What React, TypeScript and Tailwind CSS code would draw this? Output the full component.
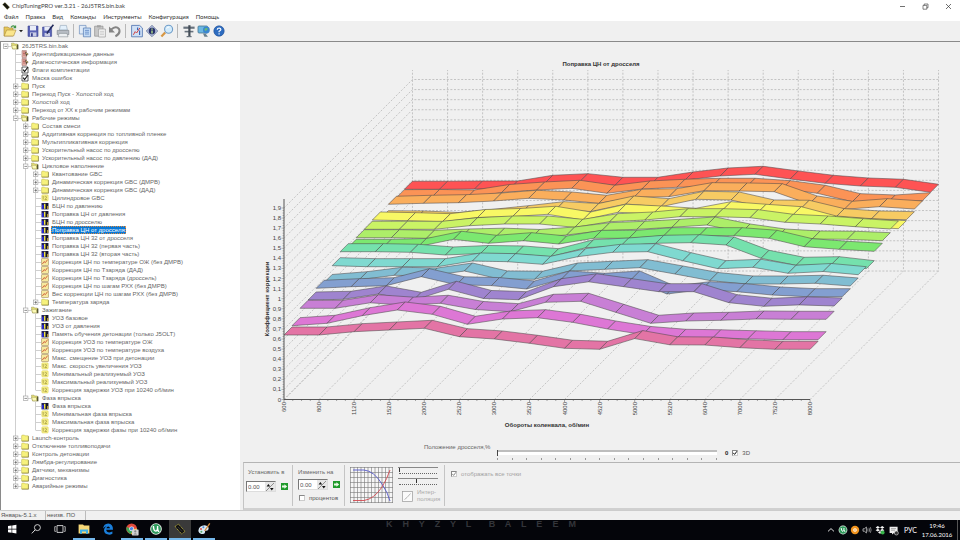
import { useState, type ReactNode } from "react";

type IconKind = "folder" | "open" | "ident" | "flag" | "number" | "surface" | "curve";

interface TreeItem {
  level: number;
  kind: IconKind;
  label: string;
}

const item = (level: number, kind: IconKind, label: string): TreeItem => ({ level, kind, label });

const tree: TreeItem[] = [
  item(0, "open", "26J5TRS.bin.bak"),
  item(1, "ident", "Идентификационные данные"),
  item(1, "ident", "Диагностическая информация"),
  item(1, "flag", "Флаги комплектации"),
  item(1, "flag", "Маска ошибок"),
  item(1, "folder", "Пуск"),
  item(1, "folder", "Переход Пуск - Холостой ход"),
  item(1, "folder", "Холостой ход"),
  item(1, "folder", "Переход от ХХ к рабочим режимам"),
  item(1, "open", "Рабочие режимы"),
  item(2, "folder", "Состав смеси"),
  item(2, "folder", "Аддитивная коррекция по топливной пленке"),
  item(2, "folder", "Мультипликативная коррекция"),
  item(2, "folder", "Ускорительный насос по дросселю"),
  item(2, "folder", "Ускорительный насос по давлению (ДАД)"),
  item(2, "open", "Цикловое наполнение"),
  item(3, "folder", "Квантование GBC"),
  item(3, "folder", "Динамическая коррекция GBC (ДМРВ)"),
  item(3, "folder", "Динамическая коррекция GBC (ДАД)"),
  item(3, "number", "Цилиндровое GBC"),
  item(3, "surface", "БЦН по давлению"),
  item(3, "surface", "Поправка ЦН от давления"),
  item(3, "surface", "БЦН по дросселю"),
  item(3, "surface", "Поправка ЦН от дросселя"),
  item(3, "surface", "Поправка ЦН 32 от дросселя"),
  item(3, "surface", "Поправка ЦН 32 (первая часть)"),
  item(3, "surface", "Поправка ЦН 32 (вторая часть)"),
  item(3, "curve", "Коррекция ЦН по температуре ОЖ (без ДМРВ)"),
  item(3, "curve", "Коррекция ЦН по Tзаряда (ДАД)"),
  item(3, "curve", "Коррекция ЦН по Tзаряда (дроссель)"),
  item(3, "curve", "Коррекция ЦН по шагам РХХ (без ДМРВ)"),
  item(3, "curve", "Вес коррекции ЦН по шагам РХХ (без ДМРВ)"),
  item(3, "folder", "Температура заряда"),
  item(2, "open", "Зажигание"),
  item(3, "surface", "УОЗ базовое"),
  item(3, "surface", "УОЗ от давления"),
  item(3, "surface", "Память обучения детонации (только J5OLT)"),
  item(3, "curve", "Коррекция УОЗ по температуре ОЖ"),
  item(3, "curve", "Коррекция УОЗ по температуре воздуха"),
  item(3, "curve", "Макс. смещение УОЗ при детонации"),
  item(3, "number", "Макс. скорость увеличения УОЗ"),
  item(3, "number", "Минимальный реализуемый УОЗ"),
  item(3, "number", "Максимальный реализуемый УОЗ"),
  item(3, "number", "Коррекция задержки УОЗ при 10240 об/мин"),
  item(2, "open", "Фаза впрыска"),
  item(3, "surface", "Фаза впрыска"),
  item(3, "number", "Минимальная фаза впрыска"),
  item(3, "number", "Максимальная фаза впрыска"),
  item(3, "number", "Коррекция задержки фазы при 10240 об/мин"),
  item(1, "folder", "Launch-контроль"),
  item(1, "folder", "Отключение топливоподачи"),
  item(1, "folder", "Контроль детонации"),
  item(1, "folder", "Лямбда-регулирование"),
  item(1, "folder", "Датчики, механизмы"),
  item(1, "folder", "Диагностика"),
  item(1, "folder", "Аварийные режимы"),
];

// does the branch at `level` go on below row `index`?
function continues(index: number, level: number) {
  for (let i = index + 1; i < tree.length; i++) {
    if (tree[i].level === level) return true;
    if (tree[i].level < level) return false;
  }
  return false;
}

function TreeIcon({ kind }: { kind: IconKind }) {
  return (
    <svg className="size-2 shrink-0" viewBox="0 0 8 8">
      {kind === "folder" && (
        <>
          <path d="M.6 1.8 L1.2 1.1 H3.4 L4 1.8 H7.2 V7 H.6Z" fill="#f7f27c" stroke="#b9b04a" strokeWidth=".5" />
          <path d="M.8 7.2 H7.5 V2.2" fill="none" stroke="#77702c" strokeWidth=".6" />
        </>
      )}
      {kind === "open" && (
        <>
          <path d="M.5 1.2 H3 L3.5 2 H6.3 V6.8 H1.5Z" fill="#f3ee7d" stroke="#8d8640" strokeWidth=".5" />
          <path d="M1.6 6.9 L.5 3.2 H5.2 L6.2 6.9Z" fill="#fbf9b4" stroke="#8d8640" strokeWidth=".5" />
          <path d="M6 2.4 H7.4 V7.2 H5.8Z" fill="#55552f" />
        </>
      )}
      {kind === "ident" && (
        <>
          <path d="M1 .6 H5.4 V7.4 H1Z" fill="#e7b5ac" stroke="#8e5a58" strokeWidth=".5" />
          <path d="M2 2 H4.5 M2 3.5 H4.5 M2 5 H4" stroke="#a33c3c" strokeWidth=".6" />
          <path d="M4 1.4 L7.6 4 L5 6.6Z" fill="#5a4b3c" />
          <path d="M5 3.2 L7 4.4" stroke="#d8c070" strokeWidth=".8" />
        </>
      )}
      {kind === "flag" && (
        <>
          <path d="M1 1 H7 V7 H1Z" fill="#fff" stroke="#333" strokeWidth=".8" />
          <path d="M2.2 3.6 L3.6 5.6 L6.8 1.2" fill="none" stroke="#111" strokeWidth="1.1" />
        </>
      )}
      {kind === "number" && (
        <>
          <rect x=".8" y=".8" width="6.4" height="6.2" rx="1" fill="#f8f18a" stroke="#d9cf55" strokeWidth=".5" />
          <path d="M2.2 2.4 V5.6 M1.5 3.1 L2.2 2.4" stroke="#8a7f28" strokeWidth=".6" fill="none" />
          <path d="M3.6 2.9 Q4.6 1.9 5.5 2.8 Q5.8 3.8 3.8 5.6 H6" stroke="#8a7f28" strokeWidth=".6" fill="none" />
        </>
      )}
      {kind === "surface" && (
        <>
          <rect x=".5" y="1" width="7" height="6.4" fill="#23235c" />
          <rect x="1" y="3" width="1.6" height="4" fill="#2a2ae0" />
          <rect x="3" y="1.8" width="1.4" height="5" fill="#f3e63c" />
          <rect x="5.2" y="1" width="1.5" height="6" fill="#151515" />
          <rect x="6.2" y="4" width="1.2" height="3" fill="#d0b03a" />
        </>
      )}
      {kind === "curve" && (
        <>
          <rect x=".7" y=".7" width="6.6" height="6.6" fill="#f6e99e" stroke="#a48b52" strokeWidth=".6" />
          <path d="M1.4 6 L3 3.6 L4.4 4.6 L6.6 1.6" fill="none" stroke="#c8472c" strokeWidth=".8" />
        </>
      )}
    </svg>
  );
}

function Branch({ index }: { index: number }) {
  const { level, kind } = tree[index];
  const expandable = kind === "folder" || kind === "open";
  return (
    <>
      {Array.from({ length: level }, (_, l) => (
        <svg key={l} className="h-2 w-2.5 shrink-0" viewBox="0 0 10 8">
          {l > 0 && continues(index, l) && <path d="M4.5 0 V8" stroke="#cfcfcf" />}
        </svg>
      ))}
      <svg className="h-2 w-2.5 shrink-0" viewBox="0 0 10 8">
        {level > 0 && <path d={continues(index, level) ? "M4.5 0 V8" : "M4.5 0 V4"} stroke="#cfcfcf" />}
        <path d="M4.5 4.5 H10" stroke="#cfcfcf" />
        {expandable && (
          <>
            <rect x="2.5" y="2" width="4.4" height="4.6" fill="#fff" stroke="#999" strokeWidth=".6" />
            <path d={kind === "open" ? "M3.4 4.4 H6" : "M3.4 4.4 H6 M4.7 3 V5.8"} stroke="#444" strokeWidth=".6" />
          </>
        )}
      </svg>
    </>
  );
}

// chart geometry
const LEFT = 284;
const BASE = 399.5;
const STEP_X = 35.07;
const STEP_Y = 10.08;
const DEPTH = 8.03;
const rpm = [600, 800, 1120, 1520, 2000, 2520, 3000, 3520, 4000, 4520, 5000, 5520, 6040, 7000, 7520, 8000];

// front edge of every ribbon, nearest ribbon first
const ribbons: { color: string; edge: number[] }[] = [
  { color: "#e374a5", edge: [335, 335, 331.7, 330, 328.3, 336.7, 339, 343.3, 348.3, 349.3, 338.6, 344.8, 345, 347.7, 349.3, 349.3] },
  { color: "#dd77d5", edge: [325.7, 323.3, 315.7, 310, 314.3, 324.3, 319, 317.7, 322.3, 329, 334.5, 337.3, 337.8, 338.8, 339.7, 339.7] },
  { color: "#c87fd5", edge: [308.3, 308.3, 302.8, 305.2, 303.3, 309.5, 311.7, 302.3, 301.3, 312.3, 323.3, 321, 320.3, 319, 319.3, 319.3] },
  { color: "#9f84cf", edge: [300, 299.3, 294, 300.3, 289.3, 298.5, 299.7, 286.7, 281.8, 286.7, 291.7, 291.7, 302.7, 306.3, 304.9, 306] },
  { color: "#839fd0", edge: [288.3, 286.7, 285.7, 276.7, 284.8, 285.6, 289, 279, 281.3, 279, 294, 289.7, 291.7, 295, 296.7, 296.7] },
  { color: "#81bdd2", edge: [282.5, 279.7, 275.3, 276, 271, 279, 279.3, 271, 269.3, 267.7, 274, 280.5, 284, 284, 283.3, 286] },
  { color: "#7fd9d0", edge: [265.7, 266.7, 266.7, 266.7, 261, 261.7, 264.3, 256.7, 252.3, 251.7, 260.7, 268.7, 267.3, 273.3, 271.5, 274.7] },
  { color: "#75e1ad", edge: [251.7, 251.7, 252.3, 255, 253.5, 254, 256.7, 247.7, 246, 243.3, 242.7, 245, 258.3, 265.3, 264.7, 268.7] },
  { color: "#7ce870", edge: [247.3, 247.3, 246.5, 239.3, 243.3, 240.7, 244, 238.3, 238.3, 235.7, 235.7, 235.7, 238.3, 246.7, 249.3, 251.3] },
  { color: "#adee69", edge: [237.7, 237.7, 238.3, 237, 236.2, 237.5, 235, 230.7, 229.3, 227.3, 225, 232, 237, 239, 239.3, 240.7] },
  { color: "#caf365", edge: [229.3, 229.3, 229.3, 225.7, 224, 224, 227.3, 221.7, 220, 216.7, 216.7, 217.7, 222.3, 224, 226.7, 229] },
  { color: "#f8f865", edge: [220, 220.7, 221.7, 217.5, 216.5, 214.3, 220, 212.3, 214, 216.3, 209.7, 212.3, 214.7, 224, 226.7, 228.7] },
  { color: "#f7cb63", edge: [218.7, 219, 220.5, 217.3, 213.7, 209.7, 211.5, 204, 206.7, 199.3, 200, 208, 208.3, 216.7, 219, 219.7] },
  { color: "#faae5c", edge: [204.3, 203.3, 202.7, 201, 198.3, 200, 203.3, 197.3, 196.7, 190.7, 191, 191.7, 204, 209.3, 206.7, 209] },
  { color: "#fb9356", edge: [197.7, 197.5, 198, 192.5, 190, 188.3, 193.3, 189, 187.3, 186.3, 186.3, 188.7, 193.3, 201.7, 203, 200.7] },
  { color: "#fe5354", edge: [189.3, 189.3, 189, 189, 183.3, 181.7, 185.3, 185.3, 180, 176, 174.3, 179, 183.3, 186, 187.3, 192.3] },
];

function SurfaceChart() {
  const depth = DEPTH * ribbons.length;
  const right = LEFT + STEP_X * (rpm.length - 1);
  return (
    <svg className="block w-full" viewBox="243 42 717 393" role="img" aria-label="Поправка ЦН от дросселя">
      <text x="601" y="66" textAnchor="middle" fontSize="6" fontWeight="700" fill="#333">
        Поправка ЦН от дросселя
      </text>

      {/* walls and floor */}
      <g stroke="#a4a4a4" strokeWidth=".6" strokeDasharray="2 1.6" fill="none">
        {rpm.map((r, j) => {
          const x = LEFT + STEP_X * j;
          return <path key={r} d={`M${x} ${BASE} l${depth} ${-depth} V70`} />;
        })}
        {Array.from({ length: 20 }, (_, k) => {
          const y = BASE - STEP_Y * k;
          return <path key={k} d={`M${LEFT} ${y} l${depth} ${-depth} H${right + depth}`} />;
        })}
      </g>

      {ribbons
        .map(({ color, edge }, i) => (
          <g key={color} fill={color} stroke="#4d4a4c" strokeWidth=".55" strokeLinejoin="round">
            {edge.slice(1).map((y, j) => {
              const x = LEFT + DEPTH * i + STEP_X * j;
              return (
                <path
                  key={j}
                  d={`M${x} ${edge[j]} l${DEPTH} ${-DEPTH} L${x + STEP_X + DEPTH} ${y - DEPTH} l${-DEPTH} ${DEPTH}Z`}
                />
              );
            })}
          </g>
        ))
        .reverse()}

      {/* axes */}
      <g stroke="#555" fill="none">
        <path d={`M${LEFT} 199 V${BASE} H${right}`} strokeWidth="1" />
        {Array.from({ length: 77 }, (_, k) => (
          <path key={k} d={`M${LEFT - (k % 4 ? 1.5 : 2.5)} ${BASE - (STEP_Y / 4) * k} H${LEFT}`} strokeWidth=".4" />
        ))}
        {Array.from({ length: 61 }, (_, k) => (
          <path key={k} d={`M${LEFT + (STEP_X / 4) * k} ${BASE} v${k % 4 ? 1.5 : 2.5}`} strokeWidth=".5" />
        ))}
      </g>
      <g fontSize="6" fill="#444">
        {Array.from({ length: 20 }, (_, k) => (
          <text key={k} x="281" y={BASE - STEP_Y * k + 2} textAnchor="end">
            {String(k / 10).replace(".", ",")}
          </text>
        ))}
        {rpm.map((r, j) => (
          <text key={r} transform={`translate(${LEFT + STEP_X * j + 2} 402) rotate(-90)`} textAnchor="end">
            {r}
          </text>
        ))}
      </g>
      <g fontSize="6" fontWeight="700" fill="#333" textAnchor="middle">
        <text transform="translate(269 299) rotate(-90)">Коэффициент коррекции</text>
        <text x="547" y="427">
          Обороты коленвала, об/мин
        </text>
      </g>
    </svg>
  );
}

function ToolButton({ label, children }: { label: string; children: ReactNode }) {
  return (
    <button type="button" aria-label={label} className="flex h-4 w-[15px] items-center justify-center">
      <svg className="size-3.5" viewBox="0 0 14 14" fill="none">
        {children}
      </svg>
    </button>
  );
}

function Separator() {
  return <div className="mx-[3px] h-3.5 w-px bg-[#b8b8b8]" />;
}

function Toolbar() {
  return (
    <div className="flex h-[21px] shrink-0 items-center border-b border-[#8a8a8a] bg-[#f0f0f0] pl-0.5">
      <ToolButton label="Открыть">
        <path d="M1 3 H5 L6 4 H10 V12 H1Z" fill="#e6c85a" stroke="#a8883a" strokeWidth=".6" />
        <path d="M1.2 12 L3.6 6 H13 L10.6 12Z" fill="#fbe68c" stroke="#a8883a" strokeWidth=".6" />
        <path d="M8 3.4 Q10 .6 12.2 3 M12.6 1.4 V3.6 H10.6" stroke="#3f9447" strokeWidth="1.1" />
      </ToolButton>
      <button type="button" aria-label="Недавние файлы" className="flex h-4 w-2 items-center justify-center">
        <svg className="size-1" viewBox="0 0 4 4">
          <path d="M0 1 H4 L2 3.2Z" fill="#222" />
        </svg>
      </button>
      <ToolButton label="Сохранить">
        <path d="M2 2 H12 V12.4 H2Z" fill="#5a63b6" stroke="#3a4390" strokeWidth=".6" />
        <path d="M4 2 H10 V6.4 H4Z" fill="#e9edf8" />
        <path d="M4 8.4 H10.4 V12.4 H4Z" fill="#c9cde6" />
        <path d="M5 9.2 H6.8 V12.4 H5Z" fill="#3a4390" />
      </ToolButton>
      <ToolButton label="Сохранить как">
        <path d="M1.6 3 H10.6 V12.4 H1.6Z" fill="#5a63b6" stroke="#3a4390" strokeWidth=".6" />
        <path d="M3.4 3 H8.8 V6.6 H3.4Z" fill="#e9edf8" />
        <path d="M3.6 9 H9 V12.4 H3.6Z" fill="#c9cde6" />
        <path d="M12.4 .8 L7 7.6 L6 9.6" stroke="#222a5a" strokeWidth="1.6" />
      </ToolButton>
      <ToolButton label="Печать">
        <path d="M4.4 1.4 L10.4 1.4 L11.4 6 H3.4Z" fill="#e3f0fb" stroke="#8ea3b5" strokeWidth=".6" />
        <path d="M1.2 6.4 H12.8 V10.6 H1.2Z" fill="#b7bcc4" stroke="#777d86" strokeWidth=".6" />
        <path d="M3 9.4 H11 L12 12.8 H2.2Z" fill="#eceff2" stroke="#888e96" strokeWidth=".6" />
      </ToolButton>
      <Separator />
      <ToolButton label="Копировать">
        <path d="M1.4 1.4 H8 V10 H1.4Z" fill="#dfeaf7" stroke="#6e8fbd" strokeWidth=".7" />
        <path d="M5.4 4 H12.6 V12.8 H5.4Z" fill="#c4dbf5" stroke="#5578b0" strokeWidth=".7" />
        <path d="M7 6.4 H11 M7 8.2 H11 M7 10 H11" stroke="#5680bd" strokeWidth=".7" />
      </ToolButton>
      <ToolButton label="Вставить">
        <path d="M1.6 2.2 H10 V12.2 H1.6Z" fill="#c8c8c8" stroke="#929292" strokeWidth=".7" />
        <path d="M4 1.2 H7.8 V3.4 H4Z" fill="#a2a2a2" />
        <path d="M5.6 5 H12.4 V13 H5.6Z" fill="#f2f2f2" stroke="#9c9c9c" strokeWidth=".7" />
        <path d="M7 7.4 H11 M7 9 H11 M7 10.6 H11" stroke="#b8b8b8" strokeWidth=".6" />
      </ToolButton>
      <ToolButton label="Отменить">
        <path d="M3.2 5.6 Q8 1.4 11 5 Q13 9 7.4 12.4" stroke="#858585" strokeWidth="2" />
        <path d="M1 2.4 V8.4 H7Z" fill="#858585" />
      </ToolButton>
      <Separator />
      <ToolButton label="График">
        <path d="M1.6 1.4 H9.6 L12.4 4 V12.8 H1.6Z" fill="#cfe0f5" stroke="#4a70ad" strokeWidth=".8" />
        <path d="M3.4 10.8 L5.2 7.6 L6.6 9 L9.8 4" stroke="#d04242" strokeWidth="1" />
        <path d="M9.6 6.6 V11 M7.6 3.4 V6" stroke="#3a66b8" strokeWidth="1.2" />
      </ToolButton>
      <ToolButton label="Сведения">
        <path d="M7 1.2 L12.8 7 L7 12.8 L1.2 7Z" fill="#aab5d4" stroke="#56668f" strokeWidth=".6" />
        <circle cx="7" cy="7" r="3.2" fill="#27306b" />
        <path d="M7 4.6 V5.8 M7 6.4 V9.4" stroke="#b9ea8c" strokeWidth="1.3" />
      </ToolButton>
      <ToolButton label="Найти">
        <path d="M5.2 8.4 L1.4 12.6" stroke="#d69745" strokeWidth="2.2" />
        <circle cx="8.6" cy="5.2" r="4" fill="#d3ebfb" stroke="#6e9cc8" strokeWidth="1.1" />
        <path d="M6.6 4.6 Q7.4 2.8 9.4 3" stroke="#fff" strokeWidth=".9" />
      </ToolButton>
      <Separator />
      <ToolButton label="Инструменты">
        <path d="M1.4 2.6 H12.6 V4.8 H1.4Z" fill="#69737e" />
        <path d="M2.6 7.6 H11.4" stroke="#69737e" strokeWidth="1.6" />
        <path d="M7.4 1.2 V13" stroke="#454e58" strokeWidth="2.2" />
        <path d="M4.6 12.6 H9.6" stroke="#69737e" strokeWidth="1.2" />
      </ToolButton>
      <ToolButton label="Подключение">
        <rect x="1" y="2" width="9.6" height="7" rx="1" fill="#6bb7e2" stroke="#46738f" strokeWidth=".8" />
        <circle cx="9.4" cy="6" r="3.4" fill="#3b86cf" />
        <path d="M7.4 5 Q9 3.2 11 4.6 Q10 6.8 8 7Z" fill="#66bb7c" />
        <path d="M6 9.4 H8.4 L11 12.8 H7.4Z" fill="#69808f" />
      </ToolButton>
      <ToolButton label="Справка">
        <circle cx="7" cy="7" r="5.2" fill="#2d6cc0" stroke="#1d4b94" strokeWidth=".6" />
        <path d="M5.2 5.8 Q5.4 4 7.1 4 Q9 4.2 8.8 5.8 Q8.4 6.8 7.1 7.3 V8.3 M7.1 9.2 V10.4" stroke="#fff" strokeWidth="1.2" />
      </ToolButton>
    </div>
  );
}

function Spinner({ label }: { label: string }) {
  return (
    <span className="flex h-[11px] w-[30px] items-center border border-[#777] border-r-[#ddd] border-b-[#ddd] bg-white">
      <input
        aria-label={label}
        defaultValue="0.00"
        className="w-[18px] min-w-0 bg-transparent pl-px text-[6px] leading-[8px] text-[#555] outline-none"
      />
      <button type="button" aria-label={`${label}: шаг`} className="flex h-full flex-1 items-center justify-center bg-[#e6e6e6]">
        <svg className="size-2" viewBox="0 0 8 8">
          <path d="M0 8 L8 0" stroke="#666" strokeWidth=".7" />
          <path d="M.6 3.4 L2.4 1 L4.2 3.4Z M4 5 H7.6 L5.8 7.4Z" fill="#111" />
        </svg>
      </button>
    </span>
  );
}

function ApplyButton({ label }: { label: string }) {
  return (
    <button type="button" aria-label={label} className="flex size-[7px] items-center justify-center bg-[#1f9a2c]">
      <svg className="size-[7px]" viewBox="0 0 7 7">
        <path d="M1 2.6 H3.4 V1.2 L6.2 3.5 L3.4 5.8 V4.4 H1Z" fill="#eafbe6" />
      </svg>
    </button>
  );
}

const checkboxClass =
  "size-[6px] shrink-0 appearance-none border border-[#888] border-r-[#ccc] border-b-[#ccc] bg-white";

function Check({ label, checked, disabled }: { label: string; checked?: boolean; disabled?: boolean }) {
  const [on, setOn] = useState(!!checked);
  return (
    <label className={`flex items-center gap-1 ${disabled ? "text-[#a3a3a3]" : "text-[#555]"}`}>
      <span className="relative flex">
        <input type="checkbox" checked={on} disabled={disabled} onChange={() => setOn(!on)} className={checkboxClass} />
        {on && (
          <svg className="pointer-events-none absolute inset-0 size-[6px]" viewBox="0 0 6 6">
            <path d="M1.2 2.8 L2.6 4.4 L5 1.2" fill="none" stroke={disabled ? "#888" : "#111"} strokeWidth="1" />
          </svg>
        )}
      </span>
      {label}
    </label>
  );
}

const rangeClass =
  "block h-[5px] w-full appearance-none border-t-2 border-[#bdbdbd] bg-white [&::-webkit-slider-thumb]:h-[6px] [&::-webkit-slider-thumb]:w-px [&::-webkit-slider-thumb]:appearance-none [&::-webkit-slider-thumb]:bg-[#444]";
const smallRangeClass =
  "block h-[5px] w-full appearance-none border-t border-[#888] bg-[#f0f0f0] [&::-webkit-slider-thumb]:h-[4px] [&::-webkit-slider-thumb]:w-px [&::-webkit-slider-thumb]:appearance-none [&::-webkit-slider-thumb]:bg-[#333]";

function SmallRange({ label, value }: { label: string; value: number }) {
  return (
    <div className="flex flex-col gap-px">
      <input type="range" aria-label={label} defaultValue={value} className={smallRangeClass} />
      <div className="mx-px border-t border-dotted border-[#666]" />
    </div>
  );
}

function CurvePreview() {
  return (
    <svg className="h-9 w-[43px]" viewBox="0 0 43 36">
      <rect width="43" height="36" fill="#f6f6f6" />
      <g stroke="#777" strokeWidth=".6">
        {Array.from({ length: 13 }, (_, i) => (
          <path key={i} d={`M${0.5 + i * 3.5} 0 V36`} />
        ))}
        {Array.from({ length: 8 }, (_, i) => (
          <path key={i} d={`M0 ${0.5 + i * 5} H43`} />
        ))}
      </g>
      <path d="M3 3 H14 Q24 4 32 17 Q38 26 40 34" fill="none" stroke="#5357c9" strokeWidth=".9" />
      <path d="M3 33.5 H14 Q24 32 32 20 Q37 12 40 3" fill="none" stroke="#d24a50" strokeWidth=".9" />
    </svg>
  );
}

function EditPanel() {
  return (
    <div className="flex h-12 shrink-0 border-t border-b-2 border-l border-t-[#b4b4b4] border-b-[#d0d0d0] border-l-[#c4c4c4] py-[2px] text-[6px] leading-[8px] text-[#666]">
      <div className="flex w-[49px] flex-col gap-[5px] border-r border-[#c4c4c4] pt-[3px] pl-0.5">
        <span className="pl-0.5 whitespace-nowrap">Установить в</span>
        <div className="flex items-center gap-[5px]">
          <Spinner label="Установить в" />
          <ApplyButton label="Установить" />
        </div>
      </div>
      <div className="flex w-[52px] flex-col gap-[3px] border-r border-[#c4c4c4] pt-[3px] pl-[5px]">
        <span className="whitespace-nowrap">Изменить на</span>
        <div className="flex items-center gap-[5px]">
          <Spinner label="Изменить на" />
          <ApplyButton label="Изменить" />
        </div>
        <div className="pt-px pl-px">
          <Check label="процентов" />
        </div>
      </div>
      <div className="flex w-[100px] gap-[5px] border-r border-[#c4c4c4] pt-[2px] pl-[5px]">
        <CurvePreview />
        <div className="flex w-10 flex-col gap-1">
          <SmallRange label="Начало" value={2} />
          <SmallRange label="Конец" value={45} />
          <button type="button" className="flex items-center gap-1 pl-1 text-left leading-[7px] text-[#aaa]">
            <svg className="size-[11px] shrink-0" viewBox="0 0 11 11">
              <rect x=".5" y=".5" width="10" height="10" fill="#fafafa" stroke="#999" strokeWidth=".7" />
              <path d="M2.5 8.5 L5 6.5 L8.5 2.5" fill="none" stroke="#999" strokeWidth=".7" />
            </svg>
            <span>
              Интер-
              <br />
              поляция
            </span>
          </button>
        </div>
      </div>
      <div className="pt-[5px] pl-1.5 whitespace-nowrap">
        <Check label="отображать все точки" checked disabled />
      </div>
    </div>
  );
}

function TaskButton({ label, state, children }: { label: string; state?: "running" | "active"; children: ReactNode }) {
  return (
    <button
      type="button"
      aria-label={label}
      className={`mx-px flex h-full w-[22px] items-center justify-center border-b-2 ${
        state ? "border-[#76b9ed]" : "border-transparent"
      } ${state === "active" ? "bg-[#3a3a3a]" : ""}`}
    >
      <svg className="size-[14px]" viewBox="0 0 14 14" fill="none">
        {children}
      </svg>
    </button>
  );
}

function Taskbar() {
  return (
    <footer className="flex h-5 shrink-0 items-stretch bg-[#04050a] text-white">
      <div className="flex">
        <TaskButton label="Пуск">
          <path
            d="M3 4 L6.6 3.5 V6.8 H3Z M7.2 3.4 L11.4 2.8 V6.8 H7.2Z M3 7.4 H6.6 V10.7 L3 10.2Z M7.2 7.4 H11.4 V11.4 L7.2 10.8Z"
            fill="#fff"
          />
        </TaskButton>
        <TaskButton label="Поиск">
          <circle cx="8.4" cy="5.6" r="3" stroke="#ddd" strokeWidth=".9" />
          <path d="M6.2 7.8 L2.8 11.4" stroke="#ddd" strokeWidth="1" />
        </TaskButton>
        <TaskButton label="Представление задач">
          <path d="M4 3.6 H10 V10.4 H4Z" stroke="#ddd" strokeWidth=".9" />
          <path d="M2.8 4.6 H1.8 V9.4 H2.8 M11.2 4.6 H12.2 V9.4 H11.2" stroke="#ddd" strokeWidth=".8" />
        </TaskButton>
        <TaskButton label="Проводник" state="running">
          <path d="M1.6 2.4 H6 L7 3.4 H12.4 V11.6 H1.6Z" fill="#f6d878" />
          <path d="M3 7.4 H11 V11.8 H9 V9.4 H5 V11.8 H3Z" fill="#3fb2e8" />
        </TaskButton>
        <TaskButton label="Edge">
          <path
            d="M2 6.6 Q2.8 1.8 7.2 1.6 Q12 1.8 12 7.8 H5.2 Q5.6 10.4 8.4 10.4 Q10 10.4 11.4 9.6 V11.8 Q9.6 12.8 7.4 12.6 Q3 12 3 8 Q3.2 5.4 5.6 4.2 Q3.4 4.6 2 6.6Z M5.4 6.2 H9 Q8.8 4.4 7.2 4.4 Q5.8 4.5 5.4 6.2Z"
            fill="#1a7fdc"
            fillRule="evenodd"
          />
        </TaskButton>
        <TaskButton label="Chrome" state="running">
          <circle cx="6.6" cy="6.8" r="5.4" fill="#e04a3c" />
          <path d="M1.6 4.8 Q.4 10 5.8 12.2 L8 8.4Z" fill="#3aa757" />
          <path d="M12 6.4 Q12 12 6 12.2 L8.6 7Z" fill="#f7c930" />
          <circle cx="6.6" cy="6.8" r="2.4" fill="#fff" />
          <circle cx="6.6" cy="6.8" r="1.8" fill="#4a86e8" />
          <rect x="7" y="7.4" width="6.6" height="6" rx=".6" fill="#d4d4d4" />
          <circle cx="10.3" cy="9.4" r="1.1" fill="#888" />
          <path d="M8.4 12.6 Q10.3 10 12.2 12.6Z" fill="#888" />
        </TaskButton>
        <TaskButton label="uTorrent" state="running">
          <circle cx="7" cy="7" r="5.8" fill="#f3f7f3" />
          <circle cx="7" cy="7" r="4.9" fill="#2f9a5c" />
          <path d="M4.4 4 Q4.6 9.4 7 9 Q8.8 8.8 8.6 4 M8.6 6 Q8.8 10 10.4 9.6" stroke="#fff" strokeWidth="1.4" />
        </TaskButton>
        <TaskButton label="ChipTuningPRO" state="active">
          <path d="M2 4.6 L5.4 2 L12 9.4 L8.6 12Z" fill="#111" stroke="#b3a93c" strokeWidth="1" strokeDasharray="1.2 .8" />
          <path d="M5 5 L9 9.4" stroke="#333" strokeWidth="1" />
        </TaskButton>
        <TaskButton label="Paint" state="running">
          <path d="M1.4 8.4 Q2 3.4 7.6 3.2 Q12 3.6 11.6 7 Q11 9 9 8.6 Q7.6 9 8 10.4 Q7.6 12.4 4.6 12 Q1.4 11.2 1.4 8.4Z" fill="#d9e9f4" />
          <circle cx="4" cy="7" r="1" fill="#d9534f" />
          <circle cx="6.4" cy="5.2" r="1" fill="#4a86d8" />
          <circle cx="4.4" cy="9.8" r="1" fill="#55a868" />
          <path d="M12.8 1.4 L7.6 9" stroke="#d38b3c" strokeWidth="1.3" />
        </TaskButton>
      </div>
      <div className="flex-1 overflow-hidden pr-20 text-center text-[9px] leading-[8px] font-bold whitespace-pre text-[#34363b]">
        {"K    H    Y    Z    Y    L       B    A    L    E    E    M"}
      </div>
      <div className="flex items-center gap-[2px] pr-0.5">
        <svg className="size-[10px]" viewBox="0 0 10 10" fill="none">
          <path d="M2 6.4 L5 3.6 L8 6.4" stroke="#ddd" />
        </svg>
        <svg className="size-[10px]" viewBox="0 0 10 10" fill="none">
          <circle cx="5" cy="5" r="4.4" fill="#e8f2ea" />
          <circle cx="5" cy="5" r="3.7" fill="#2f9a5c" />
          <path d="M3.2 3 Q3.4 6.6 5 6.4 Q6.2 6.2 6 3 M6 5 Q6.4 7 7.4 6.8" stroke="#fff" />
        </svg>
        <svg className="size-[10px]" viewBox="0 0 10 10" fill="none">
          <circle cx="5" cy="5" r="4.2" fill="#f0931e" />
          <circle cx="5" cy="5" r="1.8" fill="#fff" />
          <circle cx="5" cy="5" r=".8" fill="#f0931e" />
        </svg>
        <svg className="size-[10px]" viewBox="0 0 10 10" fill="none">
          <path d="M1 3.8 H2.4 L4.4 2 V8 L2.4 6.2 H1Z" stroke="#ddd" strokeWidth=".7" />
          <path d="M5.6 3.6 Q6.4 5 5.6 6.4 M7 2.8 Q8.2 5 7 7.2 M8.4 2.2 Q9.8 5 8.4 7.8" stroke="#ccc" strokeWidth=".6" />
        </svg>
        <svg className="size-[12px]" viewBox="0 0 12 12">
          <path
            d="M3.8 2 L6 3.4 L3.8 4.8 L1.6 3.4Z M8.2 2 L10.4 3.4 L8.2 4.8 L6 3.4Z M3.8 4.8 L6 6.2 L3.8 7.6 L1.6 6.2Z M8.2 4.8 L10.4 6.2 L8.2 7.6 L6 6.2Z M6 7 L8 8.4 L6 9.8 L4 8.4Z"
            fill="#f4f4f4"
          />
          <circle cx="8.6" cy="8.6" r="2" fill="#38b54a" />
        </svg>
        <svg className="size-[11px]" viewBox="0 0 11 11">
          <path d="M1.6 1.8 H9.6 V8 H6 L4 9.6 V8 H1.6Z" fill="#ececec" />
          <path d="M3 3.6 H8 M3 5.2 H7" stroke="#777" strokeWidth=".6" />
          <circle cx="8.4" cy="8" r="2" fill="#333" stroke="#ddd" strokeWidth=".6" />
        </svg>
        <span className="pl-[3px] font-[Lato,sans-serif] text-[7px] leading-[8px]">РУС</span>
        <time className="flex w-9 flex-col items-center font-[Lato,sans-serif] text-[6px] leading-[9px]">
          <span>19:46</span>
          <span>17.06.2016</span>
        </time>
        <div className="h-full w-px bg-[#555]" />
      </div>
    </footer>
  );
}

const menu = ["Файл", "Правка", "Вид", "Команды", "Инструменты", "Конфигурация", "Помощь"];

export default function App() {
  const [selected, setSelected] = useState("Поправка ЦН от дросселя");

  return (
    <div className="flex min-h-screen flex-col bg-[#f0f0f0] font-['Liberation_Sans',sans-serif] text-[#333]">
      {/* Title bar */}
      <header className="flex h-3 shrink-0 items-center justify-between bg-white pr-2 pl-0.5">
        <div className="flex items-center gap-0.5">
          <svg className="size-2" viewBox="0 0 8 8">
            <path d="M.6 2.6 L3 .6 L7.6 5.2 L5.2 7.4Z" fill="#16160e" stroke="#77722c" strokeWidth=".6" strokeDasharray=".8 .6" />
          </svg>
          <h1 className="font-[Lato,sans-serif] text-[6px] leading-[12px] text-[#444]">ChipTuningPRO ver.3.21 - 26J5TRS.bin.bak</h1>
        </div>
        <div className="flex items-center gap-4">
          <button type="button" aria-label="Свернуть">
            <svg className="size-[7px]" viewBox="0 0 7 7">
              <path d="M1 3.5 H6" stroke="#333" strokeWidth=".7" />
            </svg>
          </button>
          <button type="button" aria-label="Восстановить">
            <svg className="size-[7px]" viewBox="0 0 7 7" fill="none">
              <path d="M1 2.4 H4.8 V6.2 H1Z M2.2 2.4 V1 H6 V4.8 H4.8" stroke="#333" strokeWidth=".6" />
            </svg>
          </button>
          <button type="button" aria-label="Закрыть">
            <svg className="size-[7px]" viewBox="0 0 7 7">
              <path d="M1 1 L6 6 M6 1 L1 6" stroke="#333" strokeWidth=".7" />
            </svg>
          </button>
        </div>
      </header>

      <nav className="flex h-[9px] shrink-0 gap-[7px] bg-white pl-1 font-[Lato,sans-serif] text-[6px] leading-[9px]">
        {menu.map((m) => (
          <button key={m} type="button">
            {m}
          </button>
        ))}
      </nav>

      <Toolbar />

      <main className="flex flex-1">
        <aside className="w-1/4 max-w-60 shrink-0 border-l border-[#8a8a8a] bg-white text-[6px] leading-[8px] text-[#666]">
          <ul>
            {tree.map((t, i) => (
              <li key={i} className="flex h-2 items-center">
                <Branch index={i} />
                <TreeIcon kind={t.kind} />
                <button
                  type="button"
                  onClick={() => setSelected(t.label)}
                  className={`ml-0.5 h-2 px-px whitespace-nowrap ${
                    selected === t.label ? "bg-[#0a78d6] text-white outline-1 -outline-offset-1 outline-dotted outline-[#e08a3c]" : ""
                  }`}
                >
                  {t.label}
                </button>
              </li>
            ))}
          </ul>
        </aside>

        <section className="ml-[3px] flex min-w-0 flex-1 flex-col">
          <SurfaceChart />
          <div className="flex flex-1 items-center pr-[210px] pl-[181px] text-[6px] leading-[8px] text-[#666]">
            <label htmlFor="throttle" className="w-[73px] shrink-0 pb-1">
              Положение дросселя,%
            </label>
            <div className="flex-1 pt-3">
              <input id="throttle" type="range" min="0" max="15" defaultValue="0" className={rangeClass} />
              <div className="mt-[3px] flex justify-between">
                {rpm.map((r) => (
                  <span key={r} className="h-0.5 w-px bg-[#999]" />
                ))}
              </div>
            </div>
            <div className="flex items-center pt-2">
              <output className="pr-1 pl-2 font-bold text-[#222]">0</output>
              <Check label="3D" checked />
            </div>
          </div>
          <EditPanel />
        </section>
      </main>

      <div className="flex h-2.5 shrink-0 border-t border-[#ccc] pl-px text-[6px] leading-[8px] text-[#555]">
        <span className="w-[45px] border-r border-[#bbb]">Январь-5.1.x</span>
        <span className="w-10 border-r border-[#bbb] pl-px">неизв. ПО</span>
      </div>

      <Taskbar />
    </div>
  );
}
